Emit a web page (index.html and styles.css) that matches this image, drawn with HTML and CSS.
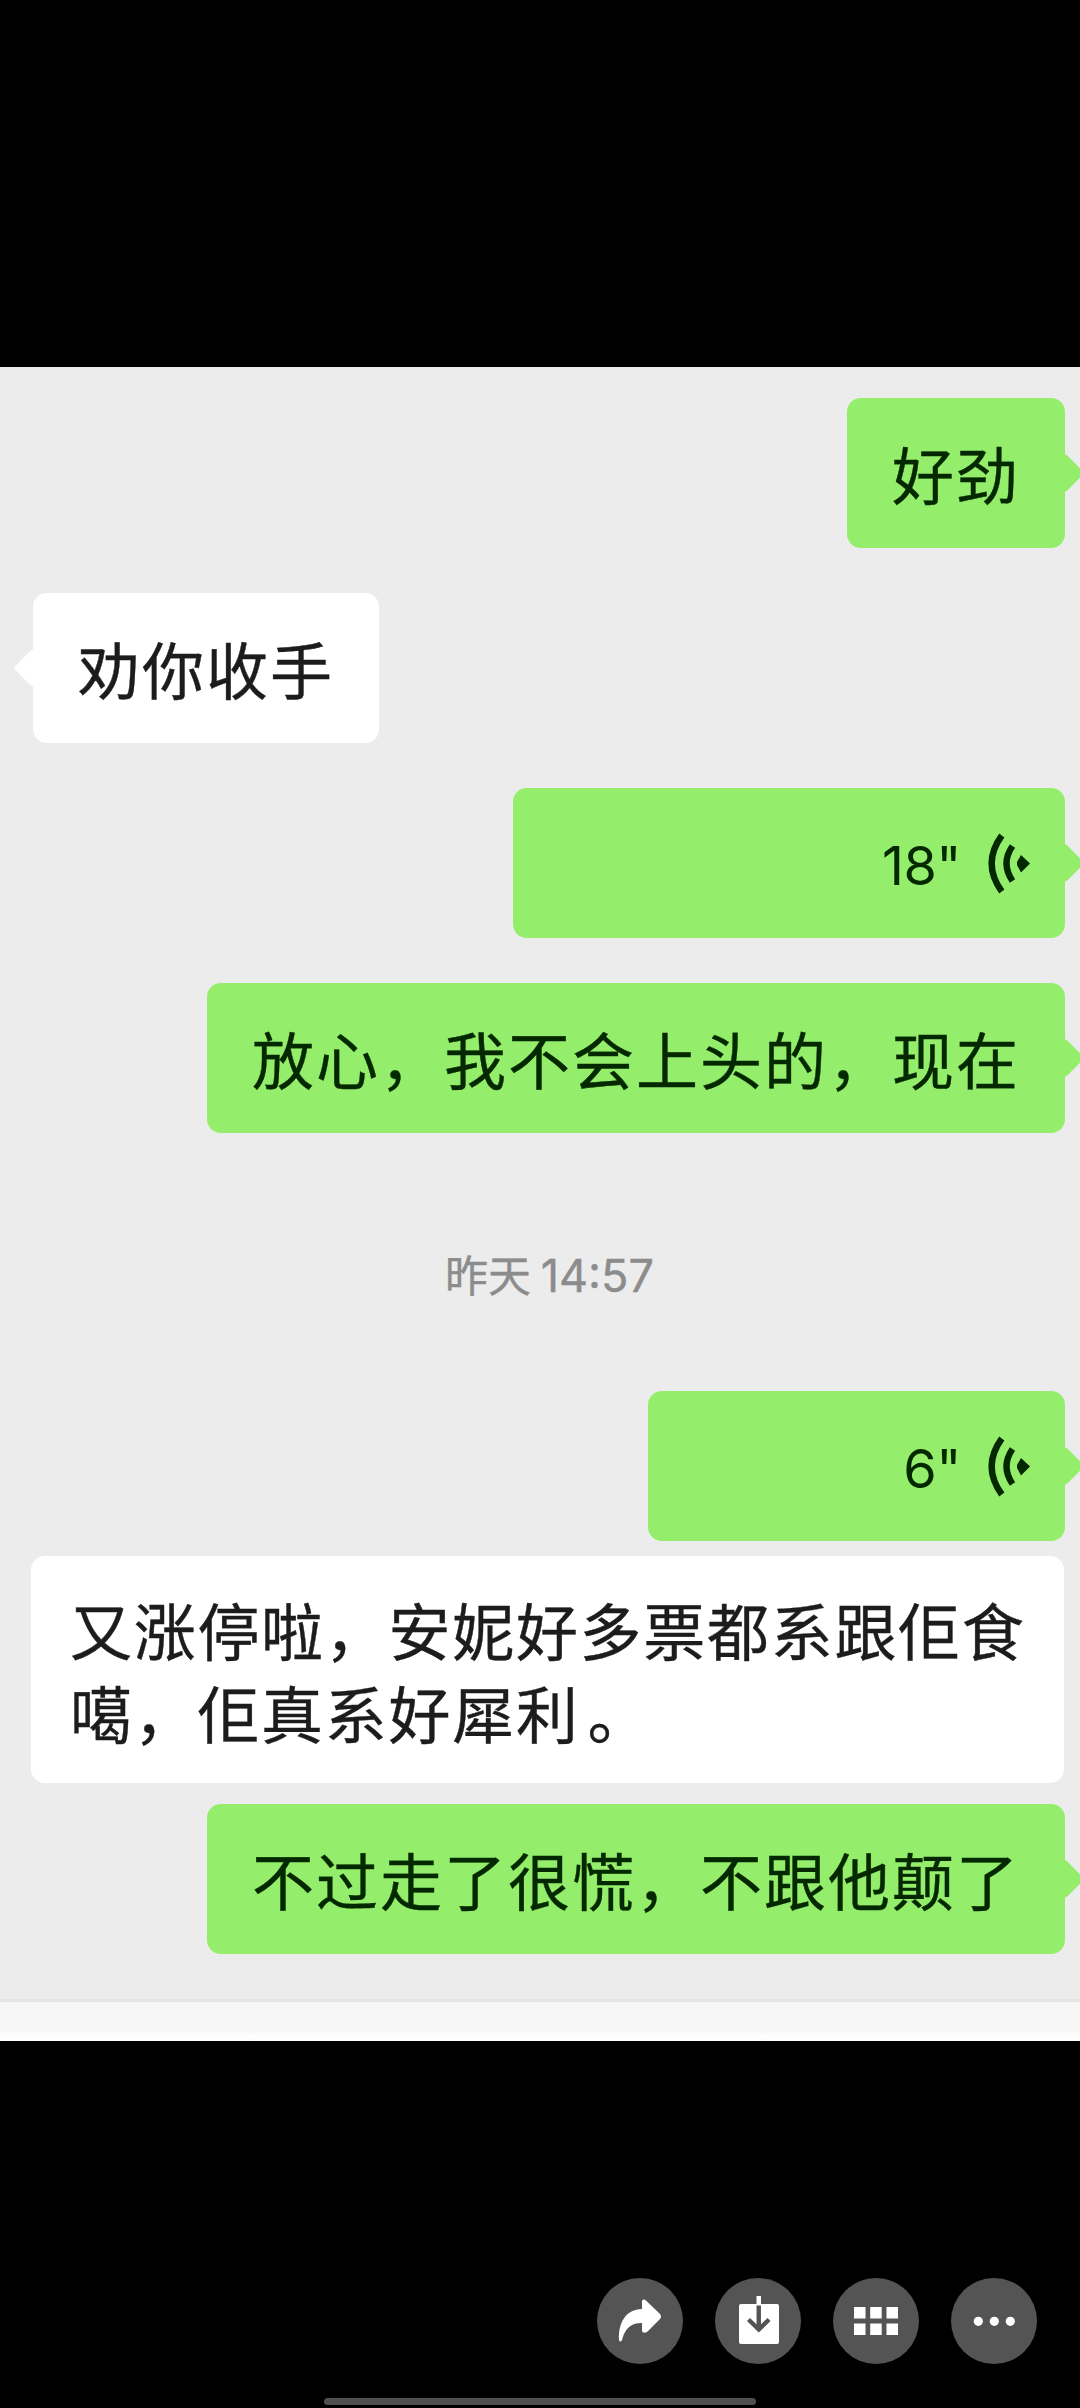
FILE: index.html
```
<!DOCTYPE html>
<html lang="zh-CN">
<head>
    <meta charset="UTF-8">
    <meta name="viewport" content="width=device-width, initial-scale=1.0">
    <title>聊天记录</title>
    <link rel="stylesheet" href="styles.css">
</head>
<body>
    <div class="chat">
        <div class="bubble me">好劲</div>
        <div class="bubble friend">劝你收手</div>
        <div class="bubble me voice voice-long">
            <span>18"</span>
            <svg class="wave" viewBox="0 0 44 61">
                <path d="M14.8 2.5Q-5.5 30.5 14.8 58.5M25.5 13Q13.5 30.5 25.5 48" fill="none" stroke="#042800" stroke-width="6.4"/>
                <path d="M34 22L43 30.5L34 39.5L30 32V29Z" fill="#042800"/>
            </svg>
        </div>
        <div class="bubble me">放心，我不会上头的，现在</div>
        <div class="time">昨天 <span>14:57</span></div>
        <div class="bubble me voice voice-short">
            <span>6"</span>
            <svg class="wave" viewBox="0 0 44 61">
                <path d="M14.8 2.5Q-5.5 30.5 14.8 58.5M25.5 13Q13.5 30.5 25.5 48" fill="none" stroke="#042800" stroke-width="6.4"/>
                <path d="M34 22L43 30.5L34 39.5L30 32V29Z" fill="#042800"/>
            </svg>
        </div>
        <div class="note">
            <div>又涨停啦，安妮好多票都系跟佢食</div>
            <div>噶，佢真系好犀利<span class="stop">。</span></div>
        </div>
        <div class="bubble me">不过走了很慌，不跟他颠了</div>
        <div class="input-bar"></div>
    </div>
    <div class="toolbar">
        <button type="button" class="tool">
            <svg viewBox="0 0 86 86">
                <path d="M45 24Q45 20 49 22.5L63 36Q65 38.5 63 41L50 54Q45 56 45 52V45C33 45 28 51 25 62Q23 65 22 62C21 45 29 31 45 31Z" fill="#fff"/>
            </svg>
        </button>
        <button type="button" class="tool">
            <svg viewBox="0 0 86 86">
                <rect x="24" y="26" width="40" height="40" rx="2" fill="#fff"/>
                <rect x="41.5" y="18" width="4.5" height="9" fill="#fff"/>
                <path d="M43.75 27.5V51M33.5 41.5L43.75 51.5L54 41.5" fill="none" stroke="#545454" stroke-width="4.4"/>
            </svg>
        </button>
        <button type="button" class="tool">
            <svg viewBox="0 0 86 86">
                <path d="M21 29h11.5v11.5H21zM37.2 29h11.5v11.5H37.2zM53.5 29H65v11.5H53.5zM21 45.5h11.5V57H21zM37.2 45.5h11.5V57H37.2zM53.5 45.5H65V57H53.5z" fill="#fff"/>
            </svg>
        </button>
        <button type="button" class="tool">
            <svg viewBox="0 0 86 86">
                <g fill="#fff">
                    <circle cx="27.3" cy="43.3" r="4.6"/>
                    <circle cx="43.3" cy="43.3" r="4.6"/>
                    <circle cx="59.3" cy="43.3" r="4.6"/>
                </g>
            </svg>
        </button>
    </div>
    <div class="home-line"></div>
</body>
</html>
```
FILE: styles.css
```
* {
    box-sizing: border-box;
}
body {
    margin: 0;
    height: 2408px;
    padding-top: 367px;
    background-color: #000;
    font-family: "Noto Sans CJK SC", sans-serif;
    overflow: hidden;
}
.chat {
    display: flex;
    flex-direction: column;
    height: 1674px;
    padding-top: 31px;
    background-color: #ececec;
    overflow: hidden;
}
.bubble {
    position: relative;
    height: 150px;
    margin-bottom: 45px;
    padding: 0 45px;
    border-radius: 14px;
    font-size: 62px;
    letter-spacing: 2px;
    line-height: 151px;
    white-space: nowrap;
    -webkit-text-stroke: 0.4px;
}
/* little arrow on the side of the bubble */
.bubble::after {
    content: "";
    position: absolute;
    top: 61px;
    width: 28px;
    height: 28px;
    border-radius: 4px;
    background-color: inherit;
    transform: rotate(45deg);
}
.me {
    align-self: flex-end;
    margin-right: 15px;
    background-color: #95ee6b;
    color: #042800;
}
.me::after {
    right: -14px;
}
.friend {
    align-self: flex-start;
    margin-left: 33px;
    background-color: #fff;
    color: #1c1c1c;
}
.friend::after {
    left: -14px;
}
.voice {
    display: flex;
    align-items: center;
    justify-content: flex-end;
    gap: 26px;
    padding-right: 34px;
    font-family: Inter, sans-serif;
    font-size: 54px;
    letter-spacing: -0.5px;
    -webkit-text-stroke: 0;
}
.voice span {
    padding-top: 4px;
}
.voice-long {
    width: 552px;
}
.voice-short {
    width: 417px;
    margin-bottom: 15px;
}
.wave {
    width: 44px;
    height: 61px;
}
.time {
    height: 214px;
    margin-left: 19px;
    color: #8c8c8c;
    font-size: 43px;
    line-height: 190px;
    text-align: center;
    -webkit-text-stroke: 0.4px;
}
.time span {
    font-family: Inter, sans-serif;
    font-size: 45px;
}
.note {
    height: 227px;
    margin: 0 16px 21px 31px;
    padding: 32px 0 0 39px;
    border-radius: 14px;
    background-color: #fff;
    color: #1c1c1c;
    font-size: 62px;
    letter-spacing: 1.7px;
    line-height: 82.5px;
    white-space: nowrap;
    -webkit-text-stroke: 0.4px;
}
.stop {
    margin-left: 8px;
}
.input-bar {
    height: 42px;
    flex-shrink: 0;
    border-top: 3px solid #e4e4e4;
    background: linear-gradient(#f6f6f6 28px, #fefefe 34px);
}
.toolbar {
    display: flex;
    justify-content: flex-end;
    gap: 32px;
    margin-top: 237px;
    padding-right: 43px;
}
.tool {
    width: 86px;
    height: 86px;
    padding: 0;
    border: none;
    border-radius: 50%;
    background-color: #545454;
}
.tool svg {
    display: block;
    width: 86px;
    height: 86px;
}
.home-line {
    width: 432px;
    height: 7px;
    margin: 34px auto 0;
    border-radius: 4px;
    background-color: #4f4f4f;
}
```
